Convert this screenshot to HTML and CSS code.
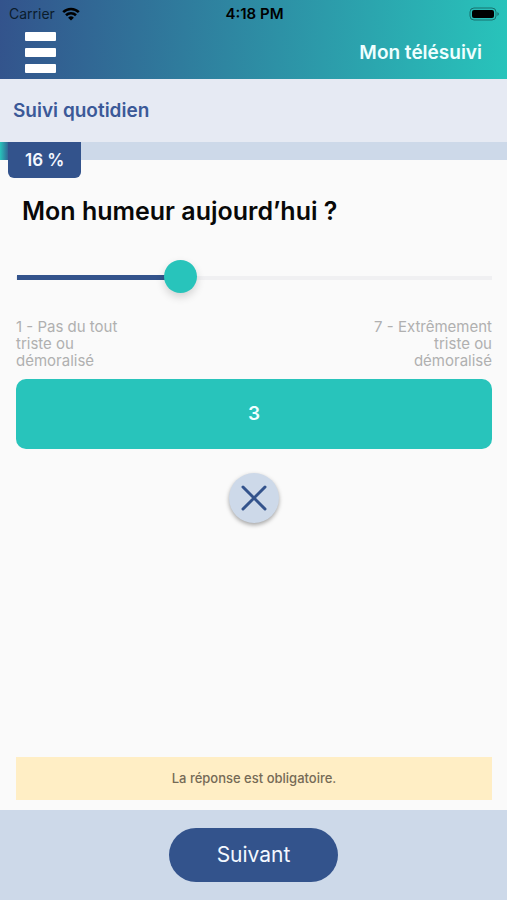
FILE: index.html
```html
<!DOCTYPE html>
<html lang="fr">
<head>
<meta charset="utf-8">
<meta name="viewport" content="width=device-width, initial-scale=1">
<title>Mon télésuivi</title>
<link rel="stylesheet" href="styles.css">
</head>
<body>
<div class="app">
  <header class="header">
    <div class="status">
      <div class="carrier">
        <span>Carrier</span>
        <svg class="wifi" viewBox="0 0 18 14" aria-hidden="true">
          <path d="M1.2 5.1a11.2 11.2 0 0 1 15.6 0" />
          <path d="M4 8.2a7.2 7.2 0 0 1 10 0" />
          <path class="dot" d="M9 13.6 6.1 10.7a4.2 4.2 0 0 1 5.8 0z" />
        </svg>
      </div>
      <span class="time">4:18 PM</span>
      <svg class="battery" viewBox="0 0 31 14" aria-hidden="true">
        <rect class="case" x="1" y="1" width="26" height="12" rx="4" />
        <rect x="3" y="3" width="22" height="8" rx="2" />
        <path class="tip" d="M28.5 5q2.500 2 0 4z" />
      </svg>
    </div>
    <div class="nav">
      <button class="menu" type="button" aria-label="Menu">
        <span></span><span></span><span></span>
      </button>
      <span class="brand">Mon télésuivi</span>
    </div>
  </header>

  <h1 class="section">Suivi quotidien</h1>

  <div class="progress">
    <div class="fill" style="width: 16%"></div>
    <span class="percent">16 %</span>
  </div>

  <main class="content">
    <h2 class="question"><label for="mood">Mon humeur aujourd’hui ?</label></h2>
    <input class="slider" id="mood" type="range" min="1" max="7" value="3">
    <div class="legend">
      <span>1 - Pas du tout triste ou démoralisé</span>
      <span class="end">7 - Extrêmement triste ou démoralisé</span>
    </div>
    <output class="answer" for="mood">3</output>
    <button class="clear" type="button" aria-label="Effacer">
      <svg viewBox="0 0 26 26" aria-hidden="true"><path d="M2 2 24 24M24 2 2 24" /></svg>
    </button>
    <p class="notice">La réponse est obligatoire.</p>
  </main>

  <footer class="footer">
    <button class="next" type="button">Suivant</button>
  </footer>
</div>
</body>
</html>
```
FILE: styles.css
```css
:root {
  --blue: #33538c;
  --teal: #28c4bb;
  --pale: #cdd9e9;
}

* {
  box-sizing: border-box;
}

body {
  margin: 0;
  background: #fafafa;
  font-family: Inter, "Liberation Sans", sans-serif;
  color: #080808;
}

button {
  border: 0;
  padding: 0;
  font: inherit;
}

.app {
  display: flex;
  flex-direction: column;
  min-height: 100vh;
}

.header {
  background: linear-gradient(94deg, var(--blue), var(--teal));
}

.status {
  display: grid;
  grid-template-columns: 1fr auto 1fr;
  align-items: center;
  height: 27px;
  padding: 0 7px 0 9px;
  font-size: 14px;
  color: #0b1c2c;
}

.carrier {
  display: flex;
  align-items: center;
  gap: 7px;
}

.wifi {
  width: 18px;
  height: 14px;
  fill: none;
  stroke: #000;
  stroke-width: 2.6;
}

.wifi .dot {
  fill: #000;
  stroke: none;
}

.time {
  font-size: 15px;
  font-weight: 600;
  color: #000;
}

.battery {
  justify-self: end;
  width: 31px;
  height: 14px;
}

.battery .case {
  fill: none;
  stroke: #000;
  stroke-opacity: 0.4;
}

.battery .tip {
  fill-opacity: 0.5;
}

.nav {
  display: flex;
  align-items: center;
  justify-content: space-between;
  height: 52px;
  padding: 0 25px 2px;
}

.menu {
  display: flex;
  flex-direction: column;
  gap: 7px;
  width: 31px;
  background: none;
}

.menu span {
  height: 9px;
  border-radius: 1px;
  background: #fff;
}

.brand {
  font-size: 19px;
  font-weight: 600;
  color: #f0ffff;
}

.section {
  margin: 0;
  padding: 20px 13px 19px;
  background: #e6eaf3;
  color: #3b5998;
  font-size: 19px;
  font-weight: 600;
  line-height: 24px;
}

.progress {
  position: relative;
  height: 18px;
  background: var(--pale);
}

.fill {
  height: 100%;
  background: linear-gradient(90deg, var(--teal), var(--blue) 12%);
}

.percent {
  position: absolute;
  top: 0;
  left: 8px;
  padding: 0 17px;
  border-radius: 0 0 6px 6px;
  background: var(--blue);
  color: #f4f8ff;
  font-size: 17px;
  font-weight: 600;
  line-height: 36px;
}

.content {
  display: flex;
  flex: 1;
  flex-direction: column;
  padding: 34px 15px 10px 16px;
}

.question {
  margin: 0 6px 32px;
  font-size: 25px;
  font-weight: 600;
  line-height: 34px;
}

.slider {
  width: 100%;
  height: 33px;
  margin: 0 0 25px;
  appearance: none;
  background:
    linear-gradient(var(--blue), var(--blue)) 1px 15px / 33% 5px no-repeat,
    linear-gradient(#f0f0f2, #f0f0f2) 0 16px / 100% 4px no-repeat;
  border-radius: 2px;
}

.slider::-webkit-slider-thumb {
  width: 33px;
  height: 33px;
  appearance: none;
  border-radius: 50%;
  background: var(--teal);
  box-shadow: 0 4px 8px rgb(0 0 0 / 16%);
}

.legend {
  display: flex;
  justify-content: space-between;
  margin-bottom: 10px;
  color: #b0b0b0;
  font-size: 15px;
  line-height: 17px;
}

.legend span {
  width: 120px;
}

.legend .end {
  text-align: right;
}

.answer {
  border-radius: 10px;
  background: var(--teal);
  color: #f0ffff;
  font-size: 19px;
  font-weight: 600;
  line-height: 70px;
  text-align: center;
}

.clear {
  display: grid;
  place-items: center;
  align-self: center;
  width: 50px;
  height: 50px;
  margin: 24px 0;
  border-radius: 50%;
  background: var(--pale);
  box-shadow: 0 2px 4px rgb(0 0 0 / 35%);
}

.clear svg {
  width: 26px;
  height: 26px;
  fill: none;
  stroke: var(--blue);
  stroke-width: 3;
  stroke-linecap: round;
}

.notice {
  margin: auto 0 0;
  background: #ffeec5;
  color: #756a56;
  font-size: 13px;
  font-weight: 500;
  line-height: 43px;
  text-align: center;
}

.footer {
  display: flex;
  justify-content: center;
  padding: 18px;
  background: var(--pale);
}

.next {
  padding: 0 48px;
  border-radius: 27px;
  background: var(--blue);
  color: #f4f8ff;
  font-size: 21px;
  line-height: 54px;
}
```
